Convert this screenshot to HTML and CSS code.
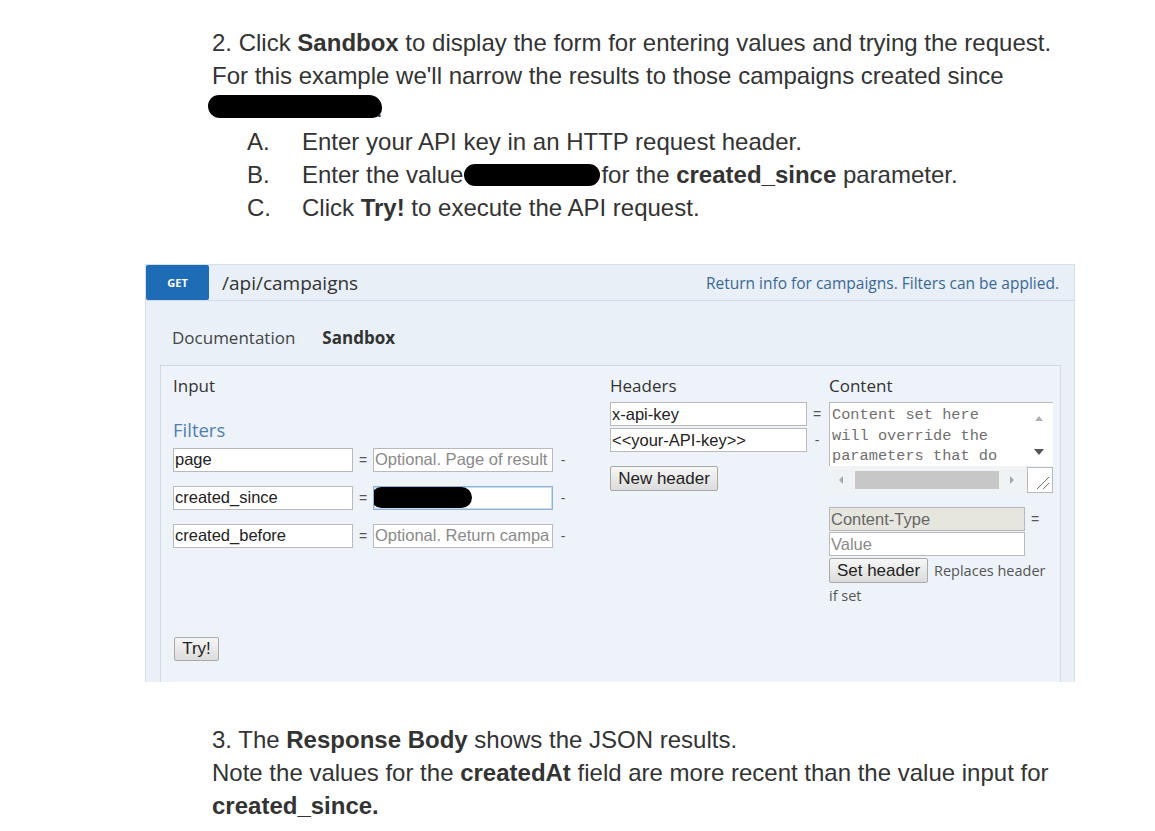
FILE: index.html
```html
<!DOCTYPE html>
<html lang="en">
<head>
<meta charset="utf-8">
<title>Sandbox example</title>
<link rel="stylesheet" href="styles.css">
</head>
<body>
<div class="doc doc-top">
  <p class="para">2. Click <b>Sandbox</b> to display the form for entering values and trying the request.<br>For this example we'll narrow the results to those campaigns created since<br><span class="redact redact-date"></span><span class="dot">.</span></p>
  <ol class="steps">
    <li><span class="lbl">A.</span><span>Enter your API key in an HTTP request header.</span></li>
    <li><span class="lbl">B.</span><span>Enter the value<span class="redact redact-value"></span>for the <b>created_since</b> parameter.</span></li>
    <li><span class="lbl">C.</span><span>Click <b>Try!</b> to execute the API request.</span></li>
  </ol>
</div>

<section class="panel">
  <header class="op-head">
    <span class="verb">GET</span>
    <span class="path">/api/campaigns</span>
    <span class="summary">Return info for campaigns. Filters can be applied.</span>
  </header>
  <nav class="tabs">
    <span class="tab">Documentation</span>
    <span class="tab active">Sandbox</span>
  </nav>
  <div class="sandbox">
    <div class="col col-input">
      <div class="col-title">Input</div>
      <div class="filters-title">Filters</div>
      <div class="param-row">
        <span class="field name-field">page</span>
        <span class="sep">=</span>
        <span class="field value-field placeholder">Optional. Page of result</span>
        <span class="sep">-</span>
      </div>
      <div class="param-row">
        <span class="field name-field">created_since</span>
        <span class="sep">=</span>
        <span class="field value-field focused"><span class="redact redact-input"></span></span>
        <span class="sep">-</span>
      </div>
      <div class="param-row">
        <span class="field name-field">created_before</span>
        <span class="sep">=</span>
        <span class="field value-field placeholder">Optional. Return campa</span>
        <span class="sep">-</span>
      </div>
      <button class="btn try-btn">Try!</button>
    </div>

    <div class="col col-headers">
      <div class="col-title">Headers</div>
      <div class="header-pair">
        <div class="hdr-row"><span class="field hdr-field">x-api-key</span><span class="sep">=</span></div>
        <div class="hdr-row"><span class="field hdr-field">&lt;&lt;your-API-key&gt;&gt;</span><span class="sep">-</span></div>
      </div>
      <button class="btn new-header">New header</button>
    </div>

    <div class="col col-content">
      <div class="col-title">Content</div>
      <div class="textarea">
        <div class="ta-text">Content set here<br>will override the<br>parameters that do</div>
        <div class="ta-vscroll">
          <span class="arrow-up"></span>
          <span class="arrow-down"></span>
        </div>
        <div class="ta-hscroll">
          <span class="arrow-left"></span>
          <span class="thumb"></span>
          <span class="arrow-right"></span>
        </div>
        <div class="ta-corner">
          <svg width="24" height="24" viewBox="0 0 24 24"><path d="M9 21 L21 9 M15 21 L21 15" stroke="#777" stroke-width="1" fill="none"/></svg>
        </div>
      </div>
      <div class="ct-block">
        <div class="hdr-row"><span class="field ct-field disabled">Content-Type</span><span class="sep">=</span></div>
        <div class="hdr-row"><span class="field ct-field placeholder">Value</span></div>
      </div>
      <div class="set-row">
        <button class="btn set-header">Set header</button>
        <span class="note">Replaces header</span>
      </div>
      <div class="note note-2">if set</div>
    </div>
  </div>
</section>

<div class="doc doc-bottom">
  <p class="para">3. The <b>Response Body</b> shows the JSON results.<br>Note the values for the <b>createdAt</b> field are more recent than the value input for<br><b>created_since.</b></p>
</div>
</body>
</html>
```

FILE: styles.css
```css
* { box-sizing: border-box; }

html, body {
  margin: 0;
  padding: 0;
  background: #ffffff;
}

body {
  width: 1155px;
  height: 831px;
  overflow: hidden;
  font-family: "Liberation Sans", Arial, sans-serif;
  color: #333333;
}

/* ---------- document text ---------- */
.doc {
  padding-left: 212px;
}

.doc-top {
  padding-top: 26px;
  height: 264px;
}

.doc-bottom {
  padding-top: 41px;
}

.para {
  margin: 0;
  font-size: 24px;
  line-height: 33px;
  color: #333333;
  white-space: nowrap;
}

.para b, .steps b {
  font-weight: bold;
  color: #333333;
}

.steps {
  list-style: none;
  margin: 0;
  padding: 0 0 0 35px;
  font-size: 24px;
  line-height: 33px;
  white-space: nowrap;
}

.steps li {
  display: flex;
}

.lbl {
  width: 55px;
  flex: none;
}

.redact {
  display: inline-block;
  background: #000;
  vertical-align: middle;
}

.redact-date {
  width: 174px;
  height: 23px;
  border-radius: 12px 14px 10px 13px;
  margin-left: -4px;
  margin-top: -8px;
}

.dot {
  margin-left: -6px;
}

.redact-value {
  width: 136px;
  height: 22px;
  border-radius: 12px;
  margin: -4px 1px 0 1px;
}

/* ---------- panel ---------- */
.panel {
  margin-left: 145px;
  width: 930px;
  height: 418px;
  background: #e9f0f7;
  border: 1px solid #d6e0ea;
  border-bottom: none;
  overflow: hidden;
  font-family: "Open Sans", "Noto Sans", sans-serif;
}

.op-head {
  display: flex;
  align-items: center;
  height: 36px;
  border-bottom: 1px solid #cfdbe6;
  background: #e8eff7;
}

.verb {
  width: 63px;
  height: 35px;
  background: #1f6cb6;
  color: #ffffff;
  font-size: 11px;
  font-weight: bold;
  display: flex;
  align-items: center;
  justify-content: center;
  border-radius: 2px;
}

.path {
  margin-left: 13px;
  font-size: 19px;
  color: #333333;
}

.summary {
  margin-left: auto;
  margin-right: 15px;
  font-size: 15.5px;
  color: #3a6895;
}

.tabs {
  display: flex;
  gap: 27px;
  padding: 26px 0 0 26px;
  height: 64px;
}

.tab {
  font-size: 17px;
  line-height: 22px;
  color: #444444;
}

.tab.active {
  font-weight: bold;
  color: #333333;
}

.sandbox {
  margin-left: 14px;
  width: 901px;
  height: 330px;
  background: #edf3f9;
  border: 1px solid #d0dae4;
  border-bottom: none;
  display: flex;
  padding: 9px 0 0 12px;
}

.col-title {
  font-size: 17px;
  line-height: 22px;
  color: #333333;
  height: 27px;
}

.col-input {
  width: 437px;
  display: flex;
  flex-direction: column;
}

.filters-title {
  font-size: 18.5px;
  line-height: 24px;
  color: #4f7fb0;
  margin-top: 16px;
  height: 29px;
}

.param-row {
  display: flex;
  align-items: center;
  height: 25px;
  margin-bottom: 13px;
}

.field {
  display: inline-flex;
  align-items: center;
  height: 24px;
  background: #ffffff;
  border: 1px solid #b9b9b9;
  font-family: "Liberation Sans", Arial, sans-serif;
  font-size: 16.5px;
  color: #222222;
  padding-left: 1px;
  white-space: nowrap;
  overflow: hidden;
}

.name-field {
  width: 180px;
}

.value-field {
  width: 180px;
}

.placeholder {
  color: #8a8a8a;
}

.focused {
  border-color: #8fb2d9;
  box-shadow: inset 0 0 0 1px #c9dcef;
}

.redact-input {
  width: 101px;
  height: 21px;
  border-radius: 11px;
  margin-left: -4px;
}

.sep {
  width: 20px;
  text-align: center;
  font-family: "Liberation Sans", Arial, sans-serif;
  font-size: 14px;
  color: #555555;
}

.btn {
  font-family: "Liberation Sans", Arial, sans-serif;
  font-size: 17px;
  color: #222222;
  background: linear-gradient(#f6f6f6, #dcdcdc);
  border: 1px solid #a9a9a9;
  border-radius: 2px;
  padding: 0 8px;
  height: 25px;
  cursor: pointer;
}

.try-btn {
  align-self: flex-start;
  margin-top: 76px;
  margin-left: 1px;
  height: 24px;
  width: 45px;
  padding: 0;
}

.col-headers {
  width: 219px;
  display: flex;
  flex-direction: column;
}

.header-pair {
  display: flex;
  flex-direction: column;
  gap: 2px;
}

.hdr-row {
  display: flex;
  align-items: center;
}

.hdr-field {
  width: 197px;
}

.new-header {
  align-self: flex-start;
  margin-top: 14px;
  width: 108px;
  padding: 0;
}

.col-content {
  width: 224px;
  display: flex;
  flex-direction: column;
}

.textarea {
  width: 224px;
  height: 91px;
  display: grid;
  grid-template-columns: 198px 26px;
  grid-template-rows: 64px 27px;
}

.ta-text {
  background: #ffffff;
  border: 1px solid #b9b9b9;
  border-right: none;
  border-bottom: none;
  font-family: "Liberation Mono", "DejaVu Sans Mono", monospace;
  font-size: 15.3px;
  line-height: 20.5px;
  color: #6f6f6f;
  padding: 2px 0 0 2px;
  white-space: nowrap;
  overflow: hidden;
}

.ta-vscroll {
  background: #ffffff;
  border-top: 1px solid #b9b9b9;
  position: relative;
}

.arrow-up {
  position: absolute;
  left: 8px;
  top: 13px;
  border-left: 4px solid transparent;
  border-right: 4px solid transparent;
  border-bottom: 5px solid #b0b0b0;
}

.arrow-down {
  position: absolute;
  left: 7px;
  top: 46px;
  border-left: 5px solid transparent;
  border-right: 5px solid transparent;
  border-top: 6px solid #555555;
}

.ta-hscroll {
  background: #f0f3f6;
  display: flex;
  align-items: center;
  padding-left: 10px;
}

.arrow-left {
  border-top: 4px solid transparent;
  border-bottom: 4px solid transparent;
  border-right: 4px solid #a8a8a8;
}

.thumb {
  width: 144px;
  height: 18px;
  background: #c7c7c7;
  margin-left: 12px;
}

.arrow-right {
  margin-left: 11px;
  border-top: 4px solid transparent;
  border-bottom: 4px solid transparent;
  border-left: 4px solid #a8a8a8;
}

.ta-corner {
  background: #ffffff;
  border: 1px solid #b9b9b9;
  display: flex;
  align-items: center;
  justify-content: center;
  margin: 1px 0 0 0;
}

.ct-block {
  margin-top: 14px;
  display: flex;
  flex-direction: column;
  gap: 1px;
}

.ct-field {
  width: 196px;
}

.disabled {
  background: #e6e6df;
  color: #666666;
}

.set-row {
  display: flex;
  align-items: center;
  margin-top: 2px;
}

.set-header {
  width: 99px;
  padding: 0;
}

.note {
  font-size: 14.5px;
  color: #555555;
  margin-left: 6px;
}

.note-2 {
  margin-left: 0;
  margin-top: 3px;
}
```
